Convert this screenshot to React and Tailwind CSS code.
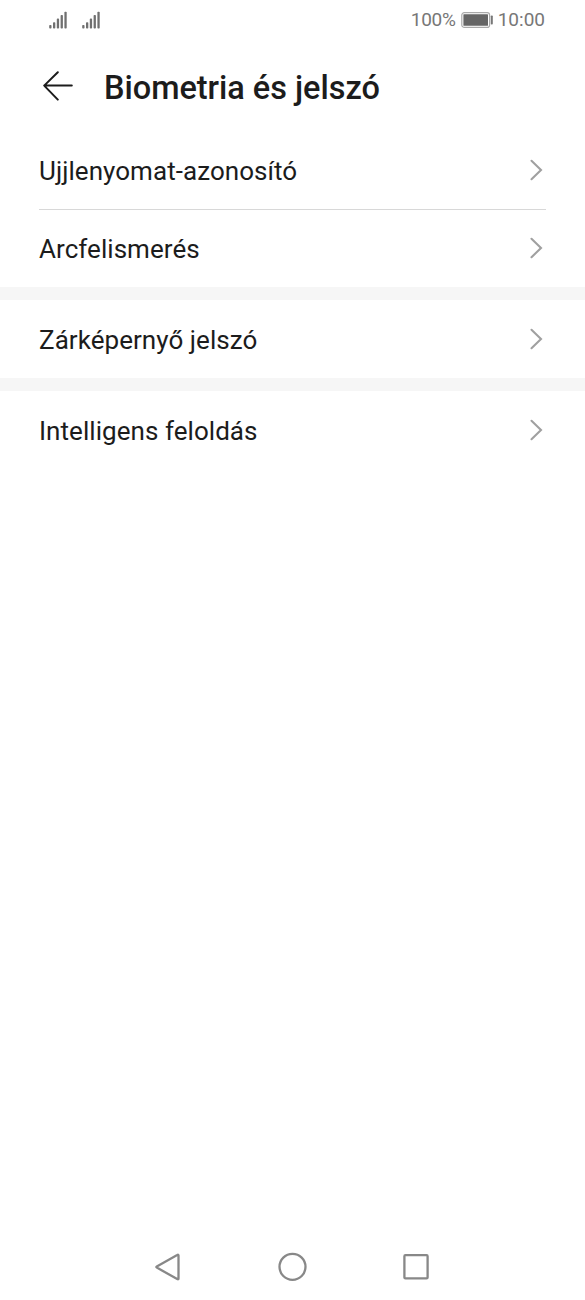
function Signal() {
  return (
    <svg width="19" height="18" viewBox="0 0 19 18" fill="#707070">
      <rect x="0.2" y="14" width="2.3" height="3.6" rx=".8" />
      <rect x="4" y="11.2" width="2.3" height="6.4" rx=".8" />
      <rect x="7.8" y="7.6" width="2.3" height="10" rx=".8" />
      <rect x="11.6" y="4" width="2.3" height="13.6" rx=".8" />
      <rect x="15.4" y="0.8" width="2.3" height="16.8" rx=".8" />
    </svg>
  );
}

function Row({ label, className = "h-[78px]" }) {
  return (
    <div className={`flex items-center justify-between ${className}`}>
      <span className="pt-[2px] text-[26px] leading-[30px] tracking-[0.05px] whitespace-nowrap text-[#1c1c1c]">
        {label}
      </span>
      <svg className="mr-[3px]" width="13" height="22" viewBox="0 0 13 22" fill="none" stroke="#a0a0a0" strokeWidth="2.1" strokeLinecap="round">
        <path d="M1.5 1.8L11 11L1.5 20.2" />
      </svg>
    </div>
  );
}

export default function App() {
  return (
    <div className="flex h-[1300px] w-[585px] flex-col bg-white font-['Roboto',sans-serif]">
      <div className="flex h-10 items-center justify-between pr-10 pl-[49px]">
        <div className="flex gap-[14px]">
          <Signal />
          <Signal />
        </div>
        <div className="flex items-center pt-px text-[19px] text-[#777]">
          <span className="tracking-[-0.25px]">100%</span>
          <svg className="mr-[5px] mb-px ml-[5px]" width="32" height="16" viewBox="0 0 32 16">
            <rect x=".8" y=".6" width="27.8" height="14.8" rx="2.5" fill="#fff" stroke="#aaa" strokeWidth="1.2" />
            <rect x="2.4" y="2.2" width="24.6" height="11.6" rx=".5" fill="#666" />
            <rect x="29.8" y="3.5" width="2" height="9" rx=".8" fill="#777" />
          </svg>
          <span>10:00</span>
        </div>
      </div>
      <div className="flex h-[91px] items-center pl-[43px]">
        <svg width="30" height="30" viewBox="0 0 30 30" fill="none" stroke="#1c1c1c" strokeWidth="2" strokeLinecap="round" strokeLinejoin="round">
          <path d="M28.8 14.6H1.2M14.8 1.2L1.2 14.6L14.8 28.6" />
        </svg>
        <h1 className="mt-[4px] ml-[31px] text-[32.5px] leading-[38px] font-medium tracking-[-0.03px] whitespace-nowrap text-[#1c1c1c]">
          Biometria és jelszó
        </h1>
      </div>
      <div className="px-[39px]">
        <Row label="Ujjlenyomat-azonosító" />
        <div className="h-px bg-[#d8d8d8]" />
        <Row label="Arcfelismerés" className="h-[77px] pb-px" />
      </div>
      <div className="h-[13px] bg-[#f6f6f6]" />
      <div className="px-[39px]">
        <Row label="Zárképernyő jelszó" />
      </div>
      <div className="h-[13px] bg-[#f6f6f6]" />
      <div className="px-[39px]">
        <Row label="Intelligens feloldás" />
      </div>
      <div className="mt-auto flex h-[66px] items-center pl-[154px]">
        <svg width="276" height="30" viewBox="0 0 276 30" fill="none" stroke="#888" strokeWidth="2.3">
          <path d="M23.2 3Q24.5 2.2 24.5 3.5V26.5Q24.5 27.8 23.2 27L2.8 15.6Q1.8 15 2.8 14.4Z" strokeLinejoin="round" />
          <circle cx="138.5" cy="14.8" r="13" />
          <rect x="250.4" y="3.2" width="23.2" height="23.2" rx="1" />
        </svg>
      </div>
    </div>
  );
}
